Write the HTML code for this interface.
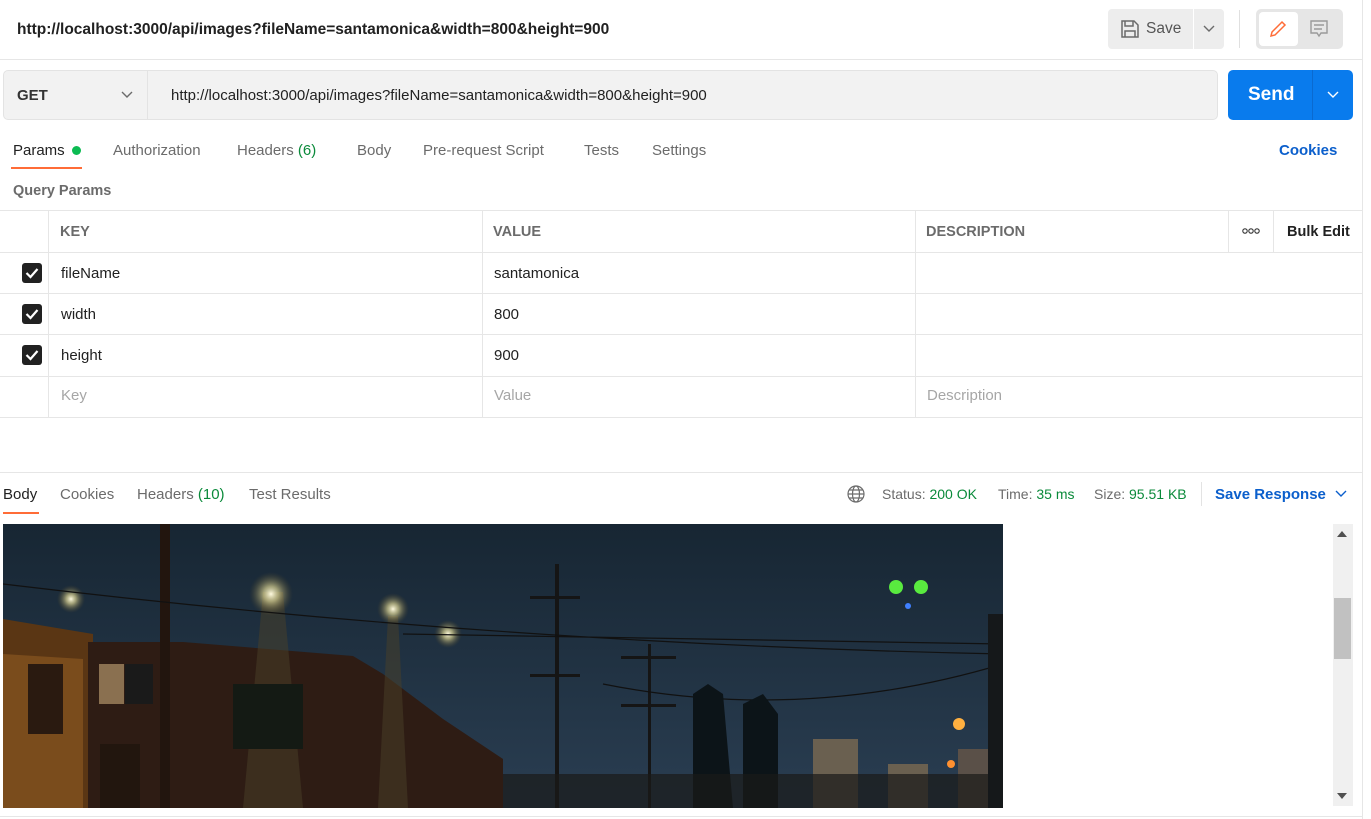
<!DOCTYPE html>
<html><head><style>
*{box-sizing:border-box;margin:0;padding:0}
body{width:1371px;height:819px;overflow:hidden;background:#fff;font-family:"Liberation Sans",Arial,sans-serif;color:#212121;position:relative;font-size:14px}
.a{position:absolute;white-space:nowrap}
.tab{position:absolute;top:142px;font-size:15px;color:#6b6b6b}
.hl{position:absolute;background:#e6e6e6}
.cb{position:absolute;left:22px;width:20px;height:20px;background:#212121;border-radius:3px}
.cb svg{position:absolute;left:3px;top:4px}
</style></head><body>
<div class="a" style="left:17px;top:21px;font-size:15.5px;font-weight:bold;color:#212121">http://localhost:3000/api/images?fileName=santamonica&amp;width=800&amp;height=900</div>
<div class="a" style="left:1108px;top:9px;width:85px;height:40px;background:#ededed;border-radius:4px 0 0 4px"></div>
<svg class="a" style="left:1120px;top:19px" width="20" height="20" viewBox="0 0 20 20" fill="none" stroke="#6b6b6b" stroke-width="1.5"><path d="M2 2h12l4 4v12H2z"/><path d="M5 2v5h8V2"/><path d="M5 18v-6h10v6"/></svg>
<div class="a" style="left:1146px;top:20px;font-size:15.5px;color:#555">Save</div>
<div class="a" style="left:1194px;top:9px;width:30px;height:40px;background:#ededed;border-radius:0 4px 4px 0"></div>
<svg class="a" style="left:1203px;top:25px" width="12" height="8"><path d="M1 1l5 5 5-5" fill="none" stroke="#6b6b6b" stroke-width="1.4"/></svg>
<div class="a" style="left:1239px;top:10px;width:1px;height:38px;background:#e0e0e0"></div>
<div class="a" style="left:1256px;top:9px;width:87px;height:40px;background:#e6e6e6;border-radius:5px"></div>
<div class="a" style="left:1259px;top:12px;width:39px;height:34px;background:#fff;border-radius:4px"></div>
<svg class="a" style="left:1268px;top:19px" width="20" height="20" fill="none" stroke="#ff6c37" stroke-width="1.5"><path d="M3 17l1-4L14 3l3 3L7 16z"/></svg>
<svg class="a" style="left:1309px;top:19px" width="20" height="20" fill="none" stroke="#9a9a9a" stroke-width="1.4"><path d="M2 2h16v12H12l-2 3-2-3H2z M5 6h10 M5 10h8"/></svg>
<div class="a" style="left:1362px;top:0;width:1px;height:819px;background:#e6e6e6"></div>
<div class="hl" style="left:0;top:59px;width:1362px;height:1px"></div>
<div class="a" style="left:3px;top:70px;width:1215px;height:50px;background:#f2f2f2;border:1px solid #e3e3e3;border-radius:5px"></div>
<div class="a" style="left:147px;top:71px;width:1px;height:48px;background:#e3e3e3"></div>
<div class="a" style="left:17px;top:87px;font-size:15px;font-weight:bold;color:#333">GET</div>
<svg class="a" style="left:121px;top:91px" width="12" height="8"><path d="M1 1l5 5 5-5" fill="none" stroke="#6b6b6b" stroke-width="1.4"/></svg>
<div class="a" style="left:171px;top:87px;font-size:15px;color:#212121">http://localhost:3000/api/images?fileName=santamonica&amp;width=800&amp;height=900</div>
<div class="a" style="left:1228px;top:70px;width:125px;height:50px;background:#097bed;border-radius:5px"></div>
<div class="a" style="left:1312px;top:70px;width:1px;height:50px;background:#0a6ad0"></div>
<div class="a" style="left:1248px;top:84px;font-size:19px;font-weight:bold;color:#fff">Send</div>
<svg class="a" style="left:1327px;top:91px" width="12" height="8"><path d="M1 1l5 5 5-5" fill="none" stroke="#fff" stroke-width="1.4"/></svg>
<div class="tab" style="left:13px;color:#212121">Params</div>
<div class="a" style="left:72px;top:146px;width:9px;height:9px;border-radius:50%;background:#0cbb52"></div>
<div class="a" style="left:11px;top:167px;width:71px;height:2px;background:#ff6c37"></div>
<div class="tab" style="left:113px">Authorization</div>
<div class="tab" style="left:237px">Headers <span style="color:#0a8a3a">(6)</span></div>
<div class="tab" style="left:357px">Body</div>
<div class="tab" style="left:423px">Pre-request Script</div>
<div class="tab" style="left:584px">Tests</div>
<div class="tab" style="left:652px">Settings</div>
<div class="tab" style="left:1279px;color:#0b5fcc;font-weight:bold">Cookies</div>
<div class="a" style="left:13px;top:183px;font-size:14.5px;font-weight:bold;color:#6b6b6b">Query Params</div>
<div class="hl" style="left:0;top:210px;width:1362px;height:1px"></div>
<div class="hl" style="left:0;top:252px;width:1362px;height:1px"></div>
<div class="hl" style="left:0;top:293px;width:1362px;height:1px"></div>
<div class="hl" style="left:0;top:334px;width:1362px;height:1px"></div>
<div class="hl" style="left:0;top:376px;width:1362px;height:1px"></div>
<div class="hl" style="left:0;top:417px;width:1362px;height:1px"></div>
<div class="hl" style="left:48px;top:210px;width:1px;height:207px"></div>
<div class="hl" style="left:482px;top:210px;width:1px;height:207px"></div>
<div class="hl" style="left:915px;top:210px;width:1px;height:207px"></div>
<div class="hl" style="left:1228px;top:210px;width:1px;height:42px"></div>
<div class="hl" style="left:1273px;top:210px;width:1px;height:42px"></div>
<div class="a" style="left:60px;top:224px;font-weight:bold;color:#6b6b6b;font-size:14.5px">KEY</div>
<div class="a" style="left:493px;top:224px;font-weight:bold;color:#6b6b6b;font-size:14.5px">VALUE</div>
<div class="a" style="left:926px;top:224px;font-weight:bold;color:#6b6b6b;font-size:14.5px">DESCRIPTION</div>
<svg class="a" style="left:1242px;top:228px" width="18" height="6" fill="none" stroke="#333" stroke-width="1.1"><circle cx="3" cy="3" r="2.2"/><circle cx="9" cy="3" r="2.2"/><circle cx="15" cy="3" r="2.2"/></svg>
<div class="a" style="left:1287px;top:224px;font-weight:bold;color:#212121;font-size:14.5px">Bulk Edit</div>
<div class="cb" style="top:263px"><svg width="14" height="12"><path d="M1.5 6l4 4 7-8" fill="none" stroke="#fff" stroke-width="2.2"/></svg></div>
<div class="cb" style="top:304px"><svg width="14" height="12"><path d="M1.5 6l4 4 7-8" fill="none" stroke="#fff" stroke-width="2.2"/></svg></div>
<div class="cb" style="top:345px"><svg width="14" height="12"><path d="M1.5 6l4 4 7-8" fill="none" stroke="#fff" stroke-width="2.2"/></svg></div>
<div class="a" style="left:61px;top:265px;font-size:15px">fileName</div>
<div class="a" style="left:494px;top:265px;font-size:15px">santamonica</div>
<div class="a" style="left:61px;top:306px;font-size:15px">width</div>
<div class="a" style="left:494px;top:306px;font-size:15px">800</div>
<div class="a" style="left:61px;top:347px;font-size:15px">height</div>
<div class="a" style="left:494px;top:347px;font-size:15px">900</div>
<div class="a" style="left:61px;top:387px;font-size:15px;color:#a6a6a6">Key</div>
<div class="a" style="left:494px;top:387px;font-size:15px;color:#a6a6a6">Value</div>
<div class="a" style="left:927px;top:387px;font-size:15px;color:#a6a6a6">Description</div>
<div class="hl" style="left:0;top:472px;width:1362px;height:1px"></div>
<div class="tab" style="left:3px;top:486px;color:#212121">Body</div>
<div class="a" style="left:3px;top:512px;width:36px;height:2px;background:#ff6c37"></div>
<div class="tab" style="left:60px;top:486px">Cookies</div>
<div class="tab" style="left:137px;top:486px">Headers <span style="color:#0a8a3a">(10)</span></div>
<div class="tab" style="left:249px;top:486px">Test Results</div>
<svg class="a" style="left:847px;top:485px" width="18" height="18" fill="none" stroke="#6b6b6b" stroke-width="1.2"><circle cx="9" cy="9" r="8"/><ellipse cx="9" cy="9" rx="3.5" ry="8"/><path d="M1 9h16M2.5 5h13M2.5 13h13"/></svg>
<div class="a" style="left:882px;top:486px;font-size:14px;color:#6b6b6b">Status: <span style="color:#0a8a3a">200 OK</span></div>
<div class="a" style="left:998px;top:486px;font-size:14px;color:#6b6b6b">Time: <span style="color:#0a8a3a">35 ms</span></div>
<div class="a" style="left:1094px;top:486px;font-size:14px;color:#6b6b6b">Size: <span style="color:#0a8a3a">95.51 KB</span></div>
<div class="a" style="left:1201px;top:482px;width:1px;height:24px;background:#e3e3e3"></div>
<div class="a" style="left:1215px;top:486px;font-size:15px;font-weight:bold;color:#0b5fcc">Save Response</div>
<svg class="a" style="left:1335px;top:490px" width="12" height="8"><path d="M1 1l5 5 5-5" fill="none" stroke="#0b5fcc" stroke-width="1.4"/></svg>
<div class="a" style="left:1333px;top:524px;width:20px;height:282px;background:#f0f0f0"></div>
<div class="a" style="left:1334px;top:598px;width:17px;height:61px;background:#c1c1c1"></div>
<svg class="a" style="left:1337px;top:531px" width="10" height="6"><path d="M0 6L5 0l5 6z" fill="#505050"/></svg>
<svg class="a" style="left:1337px;top:793px" width="10" height="6"><path d="M0 0l5 6 5-6z" fill="#505050"/></svg>
<div class="hl" style="left:0;top:816px;width:1362px;height:1px"></div>
<svg class="a" style="left:3px;top:524px" width="1000" height="284" viewBox="0 0 1000 284">
<defs><linearGradient id="sk" x1="0" y1="0" x2="0" y2="1"><stop offset="0" stop-color="#172633"/><stop offset="1" stop-color="#2a3e52"/></linearGradient>
<radialGradient id="gl" cx="0.5" cy="0.5" r="0.5"><stop offset="0" stop-color="#fffbe0"/><stop offset="0.35" stop-color="#d8d090" stop-opacity="0.7"/><stop offset="1" stop-color="#5a4a20" stop-opacity="0"/></radialGradient></defs>
<rect width="1000" height="284" fill="url(#sk)"/>
<path d="M0 95 L90 110 L90 284 L0 284Z" fill="#5a3614"/>
<path d="M0 130 L80 135 L80 284 L0 284Z" fill="#7a4c1c"/>
<path d="M85 118 L180 118 L350 132 L380 150 L440 195 L500 235 L500 284 L85 284Z" fill="#2e1c14"/>
<path d="M260 68 L240 284 L300 284 L280 68Z" fill="#4a4028" opacity="0.5"/>
<path d="M385 92 L375 284 L405 284 L395 92Z" fill="#4a4028" opacity="0.5"/>
<rect x="97" y="220" width="40" height="64" fill="#22160e"/>
<rect x="96" y="140" width="25" height="40" fill="#8a7050"/><rect x="122" y="140" width="28" height="40" fill="#1a1a1a"/>
<rect x="230" y="160" width="70" height="65" fill="#141a14"/><rect x="25" y="140" width="35" height="70" fill="#2a1a10"/>
<rect x="157" y="0" width="10" height="284" fill="#22150e"/>
<circle cx="68" cy="75" r="14" fill="url(#gl)"/><circle cx="268" cy="70" r="22" fill="url(#gl)"/>
<circle cx="390" cy="85" r="16" fill="url(#gl)"/><circle cx="445" cy="110" r="14" fill="url(#gl)"/>
<rect x="552" y="40" width="4" height="244" fill="#151515"/><rect x="527" y="72" width="50" height="3" fill="#151515"/><rect x="527" y="150" width="50" height="3" fill="#151515"/>
<rect x="645" y="120" width="3" height="164" fill="#151515"/><rect x="618" y="132" width="55" height="3" fill="#151515"/><rect x="618" y="180" width="55" height="3" fill="#151515"/>
<path d="M0 60 Q500 120 1000 130 M400 110 L1000 120 M600 160 Q800 200 1000 140" stroke="#111" fill="none" stroke-width="1.2"/>
<path d="M690 284 L690 170 L705 160 L720 170 L730 284Z M740 284 L740 180 L760 170 L775 190 L775 284Z" fill="#0c1418"/>
<rect x="810" y="215" width="45" height="69" fill="#6a6050"/><rect x="885" y="240" width="40" height="44" fill="#6a6050"/><rect x="955" y="225" width="40" height="59" fill="#5a5048"/>
<rect x="500" y="250" width="500" height="34" fill="#1a1a18" opacity="0.7"/>
<circle cx="956" cy="200" r="6" fill="#ffb040"/><circle cx="948" cy="240" r="4" fill="#ff9030"/>
<circle cx="893" cy="63" r="7" fill="#60ff40" opacity="0.9"/><circle cx="918" cy="63" r="7" fill="#60ff40" opacity="0.9"/><circle cx="905" cy="82" r="3" fill="#4080ff"/>
<rect x="985" y="90" width="15" height="194" fill="#15181a"/>
</svg>
</body></html>
